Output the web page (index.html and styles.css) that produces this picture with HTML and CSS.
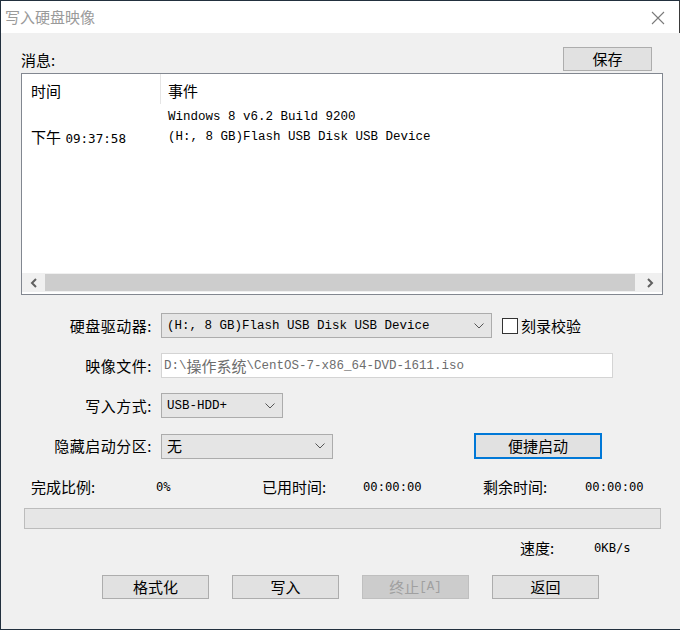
FILE: index.html
```html
<!DOCTYPE html>
<html lang="zh-CN">
<head>
<meta charset="utf-8">
<title>写入硬盘映像</title>
<link rel="stylesheet" href="styles.css">
</head>
<body>
<div class="window">
  <div class="titlebar">
    <span class="title">写入硬盘映像</span>
    <svg class="close" width="14" height="14" viewBox="0 0 14 14"><path d="M1 1 L13 13 M13 1 L1 13" stroke="#7a7a7a" stroke-width="1.1" fill="none"/></svg>
  </div>
  <div class="content">
    <div class="msg-head">
      <span class="msg-label">消息:</span>
      <div class="btn save">保存</div>
    </div>
    <div class="log">
      <div class="log-grid">
        <div class="th c1">时间</div>
        <div class="th c2">事件</div>
        <div class="td c1"></div>
        <div class="td c2 mono">Windows 8 v6.2 Build 9200</div>
        <div class="td c1">下午 <span class="num time">09:37:58</span></div>
        <div class="td c2 mono">(H:, 8 GB)Flash USB Disk USB Device</div>
      </div>
      <div class="hscroll">
        <svg class="arrow" width="8" height="10" viewBox="0 0 8 10"><path d="M6 1 L2 5 L6 9" stroke="#606060" stroke-width="2" fill="none"/></svg>
        <div class="thumb"></div>
        <svg class="arrow" width="8" height="10" viewBox="0 0 8 10"><path d="M2 1 L6 5 L2 9" stroke="#606060" stroke-width="2" fill="none"/></svg>
      </div>
    </div>

    <div class="form">
      <div class="label">硬盘驱动器:</div>
      <div class="field-row">
        <div class="select w-drive"><span class="mono">(H:, 8 GB)Flash USB Disk USB Device</span><svg class="chev" width="10" height="6" viewBox="0 0 10 6"><path d="M0.5 0.5 L5 5 L9.5 0.5" stroke="#555" stroke-width="1" fill="none"/></svg></div>
        <label class="check"><span class="box"></span><span>刻录校验</span></label>
      </div>

      <div class="label">映像文件:</div>
      <div class="field-row">
        <div class="textbox"><span class="mono">D:\</span>操作系统<span class="mono">\CentOS-7-x86_64-DVD-1611.iso</span></div>
      </div>

      <div class="label">写入方式:</div>
      <div class="field-row">
        <div class="select w-mode"><span class="mono">USB-HDD+</span><svg class="chev" width="10" height="6" viewBox="0 0 10 6"><path d="M0.5 0.5 L5 5 L9.5 0.5" stroke="#555" stroke-width="1" fill="none"/></svg></div>
      </div>

      <div class="label">隐藏启动分区:</div>
      <div class="field-row">
        <div class="select w-hide"><span>无</span><svg class="chev" width="10" height="6" viewBox="0 0 10 6"><path d="M0.5 0.5 L5 5 L9.5 0.5" stroke="#555" stroke-width="1" fill="none"/></svg></div>
        <div class="btn focus quick">便捷启动</div>
      </div>
    </div>

    <div class="status">
      <span>完成比例:</span><span class="num">0%</span>
      <span>已用时间:</span><span class="num">00:00:00</span>
      <span>剩余时间:</span><span class="num">00:00:00</span>
    </div>

    <div class="progress"></div>

    <div class="speed">
      <span>速度:</span><span class="num">0KB/s</span>
    </div>

    <div class="actions">
      <div class="btn act">格式化</div>
      <div class="btn act">写入</div>
      <div class="btn act disabled">终止<span class="mono">[A]</span></div>
      <div class="btn act">返回</div>
    </div>
  </div>
</div>
</body>
</html>
```

FILE: styles.css
```css
* { box-sizing: border-box; }

html, body {
  margin: 0;
  padding: 0;
}

body {
  background: #22303e;
  width: 680px;
  height: 630px;
  overflow: hidden;
  font-family: "Noto Sans CJK SC", "Noto Sans", sans-serif;
  font-size: 15px;
  color: #000;
}

.window {
  margin: 1px 0 0 1px;
  width: 679px;
  height: 628px;
  background: #f0f0f0;
  display: flex;
  flex-direction: column;
}

.titlebar {
  height: 32px;
  background: #fff;
  display: flex;
  align-items: center;
  justify-content: space-between;
  padding: 0 14px 0 4px;
  border-right: 1px solid #3a3a3a;
}

.title {
  color: #9a9a9a;
  font-size: 15px;
  line-height: 20px;
}

.close {
  display: block;
  margin-top: 1px;
}

.content {
  padding: 0 17px 0 20px;
  display: flex;
  flex-direction: column;
}

.msg-head {
  margin-top: 14px;
  height: 24px;
  display: flex;
  justify-content: space-between;
  align-items: flex-end;
}

.msg-label {
  line-height: 20px;
  margin-bottom: 1px;
}

.btn {
  background: #e1e1e1;
  border: 1px solid #adadad;
  display: flex;
  align-items: center;
  justify-content: center;
  line-height: 20px;
}

.save {
  width: 89px;
  height: 24px;
  margin-right: 11px;
}

.log {
  margin-top: 2px;
  height: 222px;
  background: #fff;
  border: 1px solid #828790;
  display: flex;
  flex-direction: column;
  justify-content: space-between;
}

.log-grid {
  display: grid;
  grid-template-columns: 138px 1fr;
  grid-template-rows: 33px 20px 20px;
  align-items: start;
}

.th {
  height: 30px;
  padding-top: 7px;
  line-height: 20px;
}

.th.c1 { padding-left: 9px; }

.th.c2 {
  border-left: 1px solid #e5e5e5;
  padding-left: 7px;
}

.td {
  line-height: 20px;
  white-space: nowrap;
}

.td.c1 { padding-left: 9px; }
.td.c2 { padding-left: 8px; }

.mono {
  font-family: "Liberation Mono", "Noto Sans CJK SC", monospace;
  font-size: 12.5px;
}

.num {
  font-family: "DejaVu Sans Mono", "Liberation Mono", monospace;
  font-size: 12.2px;
}

.time {
  font-size: 12.6px;
  margin-left: 1px;
}

.hscroll {
  height: 19px;
  margin-bottom: 2px;
  background: #f0f0f0;
  display: flex;
  align-items: center;
  padding: 0 8px;
  gap: 8px;
}

.arrow { display: block; flex: none; }

.thumb {
  flex: 1;
  height: 17px;
  background: #cdcdcd;
  margin: 0 3px 0 -1px;
}

.form {
  margin-top: 18px;
  display: grid;
  grid-template-columns: 131px auto;
  column-gap: 9px;
  row-gap: 15px;
  align-items: center;
}

.label {
  text-align: right;
  line-height: 20px;
  white-space: nowrap;
  letter-spacing: 0.5px;
}

.field-row {
  display: flex;
  align-items: center;
}

.select {
  height: 25px;
  background: #e5e5e5;
  border: 1px solid #acacac;
  display: flex;
  align-items: center;
  justify-content: space-between;
  padding: 0 7px 0 5px;
  line-height: 20px;
  white-space: nowrap;
}

.chev { display: block; flex: none; }

.w-drive { width: 331px; }
.w-mode { width: 122px; }
.w-hide { width: 172px; }

.check {
  display: flex;
  align-items: center;
  margin-left: 10px;
  gap: 3px;
  line-height: 20px;
}

.box {
  width: 16px;
  height: 16px;
  background: #fff;
  border: 1px solid #333;
}

.textbox {
  width: 452px;
  height: 25px;
  background: #fff;
  border: 1px solid #d4d4d4;
  color: #6d6d6d;
  padding-left: 2px;
  display: flex;
  align-items: center;
  line-height: 20px;
  white-space: nowrap;
}

.quick {
  margin-left: 141px;
  width: 128px;
  height: 26px;
}

.focus {
  border: 2px solid #0078d7;
}

.status {
  margin-top: 18px;
  padding-left: 10px;
  display: grid;
  grid-template-columns: 125px 106px 101px 120px 102px auto;
  line-height: 20px;
  white-space: nowrap;
}

.progress {
  margin: 11px 0 0 3px;
  width: 637px;
  height: 21px;
  background: #e6e6e6;
  border: 1px solid #bcbcbc;
}

.speed {
  margin-top: 9px;
  padding-left: 499px;
  display: grid;
  grid-template-columns: 74px auto;
  line-height: 20px;
}

.actions {
  margin-top: 17px;
  padding-left: 81px;
  display: flex;
  gap: 23px;
}

.act {
  width: 107px;
  height: 24px;
}

.disabled {
  background: #cccccc;
  border-color: #bfbfbf;
  color: #a0a0a0;
}
```
